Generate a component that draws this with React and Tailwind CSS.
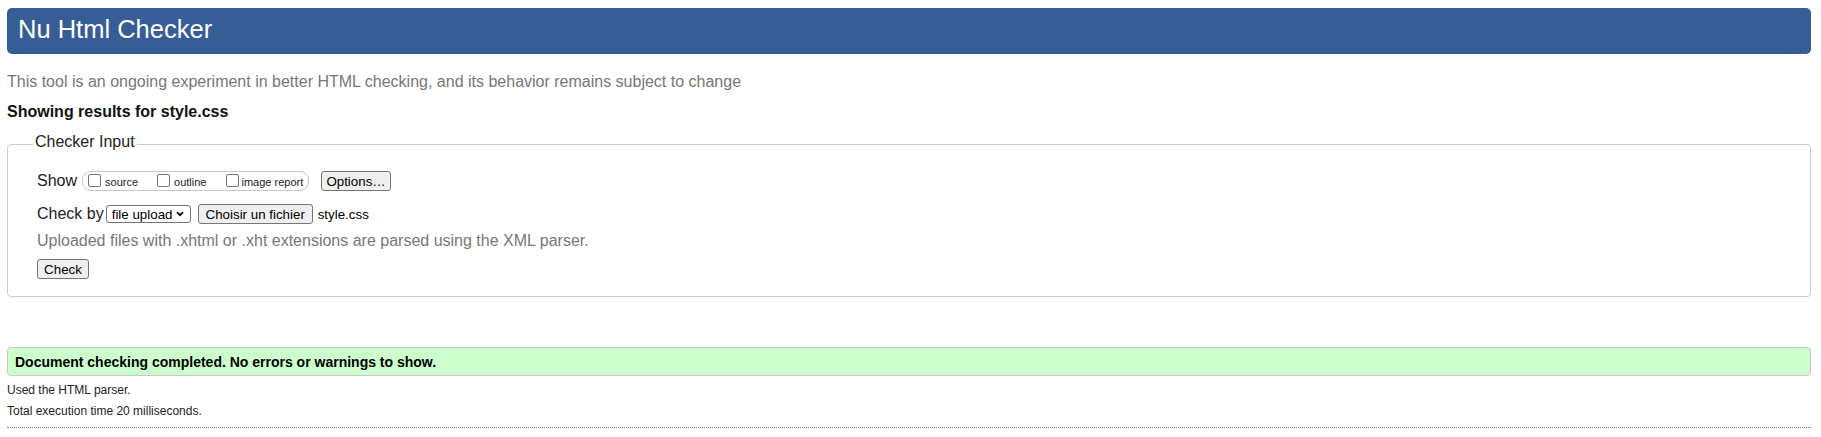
import React from "react";

function Checkbox() {
  return (
    <span className="mt-[1px] block h-[13px] w-[13px] shrink-0 rounded-[2px] border border-[#767676] bg-white" />
  );
}

function Btn({ children, className = "" }) {
  return (
    <button
      type="button"
      className={
        "flex h-[20px] items-center justify-center rounded-[3px] border border-[#767676] bg-[#efefef] text-[13.33px] leading-[15px] text-black " +
        className
      }
    >
      {children}
    </button>
  );
}

export default function App() {
  return (
    <div className="font-['Liberation_Sans',Arial,sans-serif] text-[#222] pt-[8px] pb-[8px]">
      <div className="ml-[7px] mr-[10px]">
        <h1 className="rounded-[5px] bg-[#365d95] pl-[11px] pt-[7px] pb-[11px] text-[25.5px] font-normal leading-[28px] text-white">
          Nu Html Checker
        </h1>
      </div>

      <p className="ml-[7px] mt-[19px] text-[16px] leading-[18px] text-[#777]">
        This tool is an ongoing experiment in better HTML checking, and its behavior remains subject to change
      </p>

      <p className="ml-[7px] mt-[12px] text-[16px] font-bold leading-[18px] text-[#111]">
        Showing results for style.css
      </p>

      <div className="relative ml-[7px] mr-[10px] mt-[23px] rounded-[4px] border border-[#cccccc] pl-[29px] pt-[26px] pb-[17px]">
        <span className="absolute left-[25px] top-[-12px] bg-white px-[2px] text-[16px] leading-[18px] text-[#222]">
          Checker Input
        </span>

        <div className="flex h-[20px] items-center">
          <span className="text-[16px] leading-[18px]">Show</span>
          <div className="ml-[5px] flex h-[20px] w-[227px] items-start rounded-[9px] border border-[#c8c8c8] pl-[5px] pt-[1px]">
            <Checkbox />
            <span className="ml-[4px] mt-[3px] text-[11px] leading-[13px]">source</span>
            <span className="ml-[19px]">
              <Checkbox />
            </span>
            <span className="ml-[4px] mt-[3px] text-[11px] leading-[13px]">outline</span>
            <span className="ml-[20px]">
              <Checkbox />
            </span>
            <span className="ml-[2px] mt-[3px] text-[11px] leading-[13px]">image report</span>
          </div>
          <Btn className="ml-[12px] w-[70px]">Options…</Btn>
        </div>

        <div className="mt-[13px] flex h-[20px] items-center">
          <span className="text-[16px] leading-[18px]">Check by</span>
          <div className="ml-[2px] flex h-[18px] w-[85px] items-center rounded-[3px] border border-[#767676] bg-white pl-[5px] pr-[6px]">
            <span className="text-[13.33px] leading-[15px] text-black">file upload</span>
            <svg className="ml-auto" width="8" height="6" viewBox="0 0 8 6">
              <polyline points="1,1.2 4,4.2 7,1.2" fill="none" stroke="#000" strokeWidth="1.8" />
            </svg>
          </div>
          <Btn className="ml-[7px] w-[115px]">Choisir un fichier</Btn>
          <span className="ml-[5px] text-[13.33px] leading-[15px] text-black">style.css</span>
        </div>

        <p className="mt-[8px] text-[16px] leading-[18px] text-[#777]">
          Uploaded files with .xhtml or .xht extensions are parsed using the XML parser.
        </p>

        <div className="mt-[9px] flex">
          <Btn className="w-[52px]">Check</Btn>
        </div>
      </div>

      <div className="ml-[7px] mr-[10px] mt-[50px] rounded-[4px] border border-[#c8c8c8] bg-[#ccffcc] pl-[7px] pt-[6px] pb-[5px]">
        <p className="text-[14px] font-bold leading-[16px] text-black">
          Document checking completed. No errors or warnings to show.
        </p>
      </div>

      <p className="ml-[7px] mt-[7px] text-[12px] leading-[14px] text-[#222]">Used the HTML parser.</p>
      <p className="ml-[7px] mt-[7px] text-[12px] leading-[14px] text-[#222]">
        Total execution time 20 milliseconds.
      </p>
      <div className="ml-[7px] mr-[10px] mt-[9px] border-t border-dotted border-[#777]" />
    </div>
  );
}
